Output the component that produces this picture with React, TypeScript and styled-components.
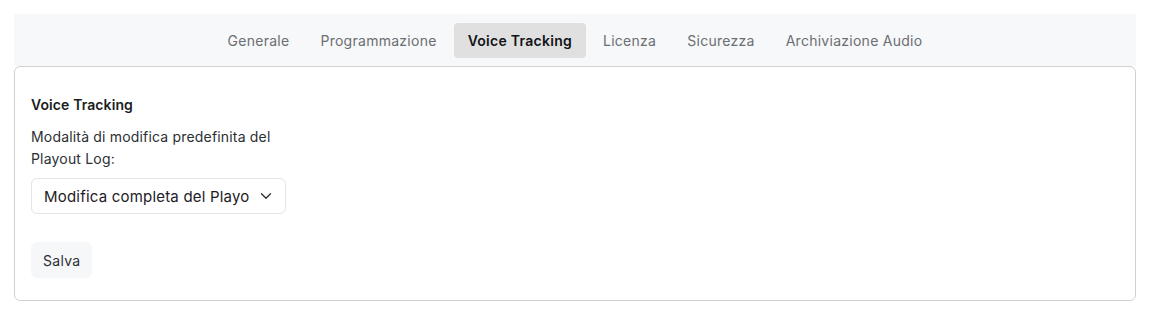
import { useState } from "react";
import styled, { createGlobalStyle } from "styled-components";
import { ChevronDown } from "lucide-react";

const GlobalStyle = createGlobalStyle`
  * { box-sizing: border-box; }
  body {
    margin: 0;
    background: #ffffff;
    font-family: Inter, "Noto Sans", "Liberation Sans", sans-serif;
    color: #1f2328;
  }
`;

const TABS = [
  "Generale",
  "Programmazione",
  "Voice Tracking",
  "Licenza",
  "Sicurezza",
  "Archiviazione Audio",
];

function App() {
  const [active, setActive] = useState("Voice Tracking");

  return (
    <>
      <GlobalStyle />
      <Page>
        <TabBar>
          {TABS.map((t) => (
            <Tab key={t} $active={t === active} onClick={() => setActive(t)}>
              {t}
            </Tab>
          ))}
        </TabBar>
        <Card>
          <Title>Voice Tracking</Title>
          <Label htmlFor="vt-mode">
            Modalità di modifica predefinita del
            <br />
            Playout Log:
          </Label>
          <SelectWrap>
            <Select id="vt-mode" defaultValue="full">
              <option value="full">Modifica completa del Playout Log</option>
              <option value="vt">Solo Voice Tracking</option>
            </Select>
            <Chevron size={18} strokeWidth={1.7} />
          </SelectWrap>
          <SaveButton type="button">Salva</SaveButton>
        </Card>
      </Page>
    </>
  );
}

const Page = styled.div`
  padding: 14px 14px 0 14px;
  display: flex;
  flex-direction: column;
`;

const TabBar = styled.div`
  display: flex;
  justify-content: center;
  align-items: center;
  gap: 3px;
  height: 52px;
  background-color: #f7f8f9;
`;

const Tab = styled.button<{ $active: boolean }>`
  border: none;
  border-radius: 4px;
  padding: 0 14px;
  height: 35px;
  font-family: inherit;
  font-size: 14px;
  letter-spacing: 0.27px;
  font-weight: ${({ $active }) => ($active ? 600 : 400)};
  color: ${({ $active }) => ($active ? "#111418" : "#6b6e73")};
  background-color: ${({ $active }) => ($active ? "#e0e0e0" : "transparent")};
  cursor: pointer;
`;

const Card = styled.div`
  display: flex;
  flex-direction: column;
  align-items: flex-start;
  border: 1px solid #cfd1d4;
  border-radius: 6px;
  padding: 28px 16px 21px 16px;
  height: 235px;
`;

const Title = styled.h3`
  margin: 0 0 11px 0;
  font-size: 14px;
  font-weight: 600;
  line-height: 20px;
  letter-spacing: 0.1px;
  color: #1a1d21;
`;

const Label = styled.label`
  font-size: 14px;
  line-height: 22px;
  letter-spacing: 0.18px;
  color: #2b2f33;
  margin-bottom: 8px;
`;

const SelectWrap = styled.div`
  position: relative;
  width: 255px;
`;

const Select = styled.select`
  appearance: none;
  width: 100%;
  height: 36px;
  padding: 0 35px 0 12px;
  border: 1px solid #e3e4e6;
  border-radius: 6px;
  background-color: #ffffff;
  font-family: inherit;
  font-size: 15px;
  letter-spacing: 0.2px;
  color: #1c2024;
  outline: none;
`;

const Chevron = styled(ChevronDown)`
  position: absolute;
  right: 11px;
  top: 9px;
  color: #2b2f33;
  pointer-events: none;
`;

const SaveButton = styled.button`
  margin-top: 28px;
  border: none;
  border-radius: 6px;
  background-color: #f6f7f9;
  padding: 0 12px;
  height: 36px;
  font-family: inherit;
  font-size: 14px;
  letter-spacing: 0.3px;
  color: #2b2f33;
  cursor: pointer;
`;

export default App;
